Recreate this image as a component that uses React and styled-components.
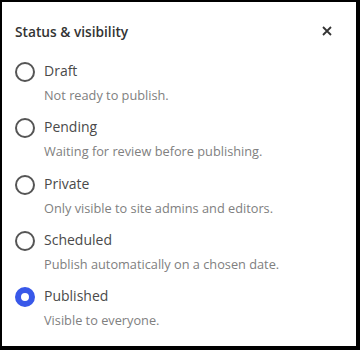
import styled, { createGlobalStyle } from "styled-components";

const GlobalStyle = createGlobalStyle`
  html, body {
    margin: 0;
    padding: 0;
    background: #000;
  }
  body {
    font-family: "Open Sans", "Noto Sans", sans-serif;
  }
`;

const Frame = styled.div`
  width: 360px;
  height: 350px;
  padding: 2px 4px 4px 2px;
  box-sizing: border-box;
`;

const Panel = styled.div`
  background: #fff;
  height: 100%;
  padding: 20px 24px 0 13px;
  box-sizing: border-box;
  display: flex;
  flex-direction: column;
`;

const Header = styled.div`
  display: flex;
  align-items: center;
  justify-content: space-between;
  height: 18px;
  margin-bottom: 20px;
`;

const Title = styled.h2`
  margin: 0;
  font-size: 13.7px;
  font-weight: 600;
  color: #333;
`;

const CloseButton = styled.button`
  border: 0;
  background: none;
  padding: 0;
  width: 11px;
  height: 11px;
  display: flex;
  align-items: center;
  justify-content: center;
  cursor: pointer;
`;

const Options = styled.div`
  display: flex;
  flex-direction: column;
  gap: 13.3px;
`;

const Option = styled.label`
  display: grid;
  grid-template-columns: 20px 1fr;
  column-gap: 9px;
  row-gap: 5px;
  align-items: center;
  cursor: pointer;
`;

const Radio = styled.span`
  width: 20px;
  height: 20px;
  margin-top: 2px;
  box-sizing: border-box;
  border-radius: 50%;
  border: ${(p) => (p.$checked ? "6px solid #3858e9" : "2px solid #555")};
  background: #fff;
`;

const Label = styled.span`
  font-size: 14px;
  color: #4a4a4a;
  line-height: 18px;
`;

const Desc = styled.span`
  grid-column: 2;
  font-size: 12.75px;
  color: #808080;
  line-height: 16px;
`;

const options = [
  { label: "Draft", desc: "Not ready to publish." },
  { label: "Pending", desc: "Waiting for review before publishing." },
  { label: "Private", desc: "Only visible to site admins and editors." },
  { label: "Scheduled", desc: "Publish automatically on a chosen date." },
  { label: "Published", desc: "Visible to everyone.", checked: true },
];

export default function App() {
  return (
    <>
      <GlobalStyle />
      <Frame>
        <Panel>
          <Header>
            <Title>Status &amp; visibility</Title>
            <CloseButton aria-label="Close">
              <svg width="10" height="10" viewBox="0 0 10 10">
                <path d="M1 1L9 9M9 1L1 9" stroke="#333" strokeWidth="1.8" />
              </svg>
            </CloseButton>
          </Header>
          <Options>
            {options.map((o) => (
              <Option key={o.label}>
                <Radio $checked={o.checked} />
                <Label>{o.label}</Label>
                <Desc>{o.desc}</Desc>
              </Option>
            ))}
          </Options>
        </Panel>
      </Frame>
    </>
  );
}
